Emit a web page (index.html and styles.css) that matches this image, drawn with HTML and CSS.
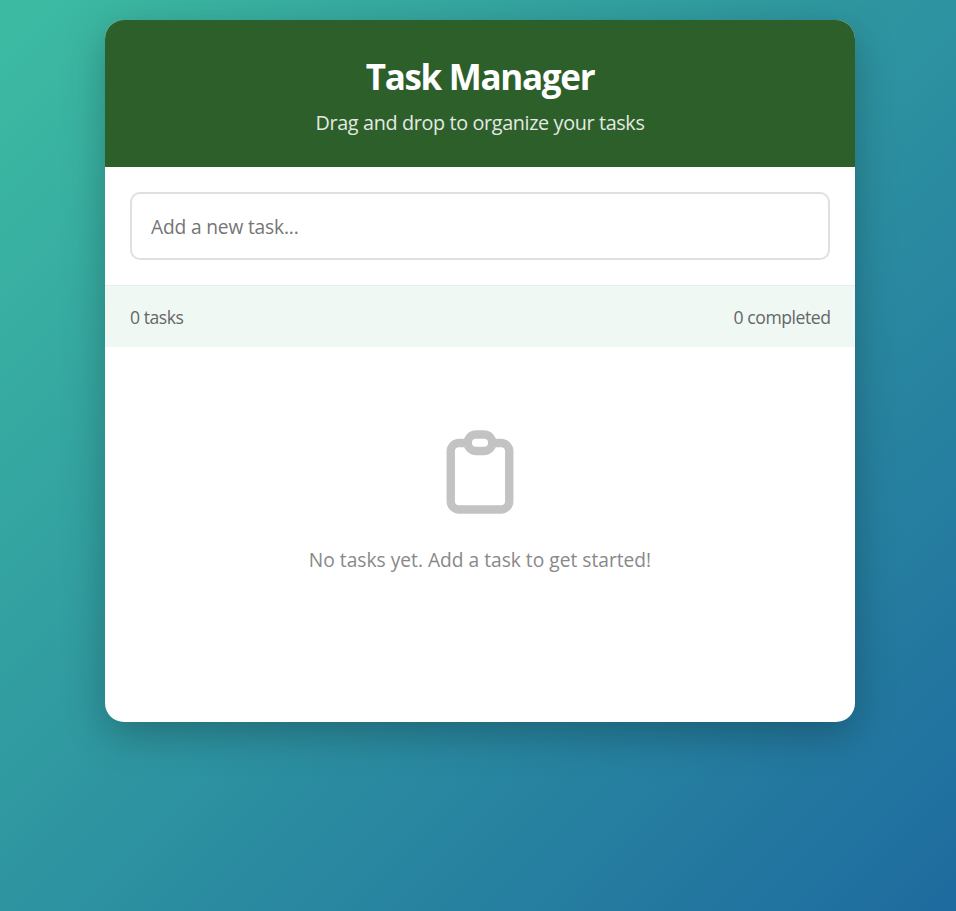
FILE: index.html
```html
<!DOCTYPE html>
<html lang="en">
<head>
<meta charset="utf-8">
<title>Task Manager</title>
<link rel="stylesheet" href="styles.css">
</head>
<body>
<main class="card">
  <header class="header">
    <h1>Task Manager</h1>
    <p class="subtitle">Drag and drop to organize your tasks</p>
  </header>
  <div class="entry"><input class="field" type="text" placeholder="Add a new task..."></div>
  <div class="stats"><span>0 tasks</span><span class="done">0 completed</span></div>
  <section class="empty">
    <svg class="icon" viewBox="0 0 68 84" fill="none" stroke="#c3c3c3" stroke-width="8.4">
      <rect x="4.75" y="13" width="58.5" height="66.5" rx="8.3"/>
      <rect x="21.75" y="4.5" width="24.5" height="16.5" rx="8.25" fill="#fff"/>
    </svg>
    <p class="message">No tasks yet. Add a task to get started!</p>
  </section>
</main>
</body>
</html>
```

FILE: styles.css
```css
* { box-sizing: border-box; margin: 0; padding: 0; }
body {
  min-height: 911px;
  padding: 20px 101px 0 105px;
  font-family: "Segoe UI", "Open Sans", "Noto Sans", sans-serif;
  background: linear-gradient(135deg, #3dbca2, #1e6b9f);
}
.card {
  width: 750px;
  height: 702px;
  overflow: hidden;
  border-radius: 19px;
  background: #fff;
  box-shadow: 0 12px 40px rgba(0, 0, 0, 0.26);
}
.header {
  height: 147px;
  padding-top: 32px;
  text-align: center;
  color: #fff;
  background: #2d5f2a;
}
h1 { font-size: 35px; line-height: 50px; font-weight: 700; letter-spacing: -1.3px; }
.subtitle {
  margin-top: 7px;
  font-size: 19.8px;
  line-height: 28px;
  font-weight: 500;
  letter-spacing: -0.36px;
  opacity: 0.87;
}
.entry { height: 118px; padding: 25px; }
.field {
  display: block;
  width: 100%;
  height: 68px;
  padding: 0 19px;
  border: 2px solid #e0e0e0;
  border-radius: 10px;
  font: 19.2px "Segoe UI", "Open Sans", "Noto Sans", sans-serif;
  letter-spacing: -0.17px;
}
.field::placeholder { color: #757575; }
.stats {
  display: flex;
  justify-content: space-between;
  align-items: center;
  height: 62px;
  padding: 0 25px;
  border-top: 1px solid #e8eeea;
  background: #f0f8f4;
  color: #666;
  font-size: 17.6px;
  letter-spacing: -0.46px;
}
.done { margin-right: -0.46px; }
.empty {
  display: flex;
  flex-direction: column;
  align-items: center;
  padding-top: 83px;
  color: #888;
}
.icon { width: 68px; height: 84px; }
.message { margin-top: 32px; font-size: 19.2px; line-height: 28px; }
```
